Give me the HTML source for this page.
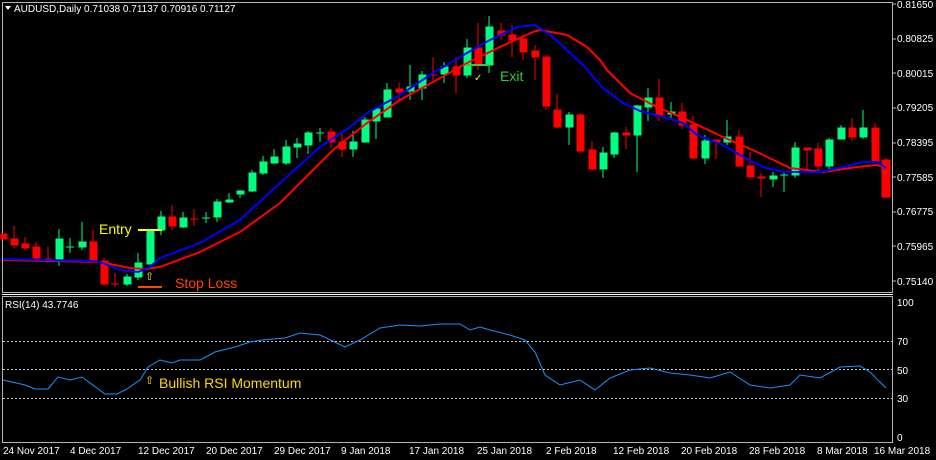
<!DOCTYPE html>
<html><head><meta charset="utf-8"><style>
html,body{margin:0;padding:0;background:#000;width:936px;height:460px;overflow:hidden}
svg{display:block}
text{font-family:"Liberation Sans",sans-serif}
</style></head><body>
<svg width="936" height="460" viewBox="0 0 936 460" xmlns="http://www.w3.org/2000/svg">
<rect width="936" height="460" fill="#000"/>
<!-- frames -->
<rect x="2.5" y="2.5" width="890" height="290" fill="none" stroke="#b4b4b4" stroke-width="1"/>
<line x1="2" y1="294.5" x2="893" y2="294.5" stroke="#ffffff" stroke-width="1"/>
<rect x="2.5" y="296.5" width="890" height="146" fill="none" stroke="#b4b4b4" stroke-width="1"/>
<text x="14" y="12" fill="#fff" font-size="10">AUDUSD,Daily  0.71038 0.71137 0.70916 0.71127</text>
<polygon points="5,6 11,6 8,10" fill="#fff"/>
<text x="5" y="308" fill="#fff" font-size="10">RSI(14) 43.7746</text>
<!-- price axis -->
<g fill="#fff" font-size="10">
<text x="897" y="8">0.81650</text><text x="897" y="42">0.80825</text><text x="897" y="77">0.80015</text>
<text x="897" y="111">0.79205</text><text x="897" y="146">0.78395</text><text x="897" y="181">0.77585</text>
<text x="897" y="215">0.76775</text><text x="897" y="250">0.75965</text><text x="897" y="285">0.75140</text>
<text x="897" y="306">100</text><text x="897" y="345">70</text><text x="897" y="374">50</text>
<text x="897" y="402">30</text><text x="897" y="441">0</text>
</g>
<g stroke="#b4b4b4"><line x1="893" y1="4" x2="896" y2="4"/><line x1="893" y1="39" x2="896" y2="39"/><line x1="893" y1="73" x2="896" y2="73"/><line x1="893" y1="108" x2="896" y2="108"/><line x1="893" y1="143" x2="896" y2="143"/><line x1="893" y1="177" x2="896" y2="177"/><line x1="893" y1="212" x2="896" y2="212"/><line x1="893" y1="246" x2="896" y2="246"/><line x1="893" y1="281" x2="896" y2="281"/></g>
<!-- date axis -->
<g fill="#fff" font-size="10">
<text x="3" y="454">24 Nov 2017</text><text x="70" y="454">4 Dec 2017</text><text x="138" y="454">12 Dec 2017</text>
<text x="206" y="454">20 Dec 2017</text><text x="274" y="454">29 Dec 2017</text><text x="341" y="454">9 Jan 2018</text>
<text x="409" y="454">17 Jan 2018</text><text x="477" y="454">25 Jan 2018</text><text x="546" y="454">2 Feb 2018</text>
<text x="613" y="454">12 Feb 2018</text><text x="681" y="454">20 Feb 2018</text><text x="749" y="454">28 Feb 2018</text>
<text x="817" y="454">8 Mar 2018</text><text x="874" y="454">16 Mar 2018</text>
</g>
<!-- RSI levels -->
<g stroke="#c8c8c8" stroke-dasharray="2,2" stroke-width="1">
<line x1="3" y1="341.5" x2="892" y2="341.5"/><line x1="3" y1="369.5" x2="892" y2="369.5"/><line x1="3" y1="398.5" x2="892" y2="398.5"/>
</g>
<polyline fill="none" stroke="#1e90ff" stroke-width="1" points="3,380 12,382 25,385 35,389 48,389 58,377 70,380 82,377 105,394 117,394 127,389 140,380 148,367 160,360 172,363 180,360 200,360 215,352 235,347 250,342 262,340 285,338 300,333 320,335 345,347 360,340 380,328 400,325 420,326 440,324 460,324 470,330 480,327 490,330 510,335 525,340 535,352 545,375 560,385 580,380 595,390 610,378 630,370 650,368 670,373 690,375 710,378 730,372 750,385 770,388 790,385 800,375 820,378 840,367 860,366 870,372 886,388"/>
<g>
<g stroke="#ff0000" fill="#ff0000">
<line x1="14" y1="226" x2="14" y2="248"/><rect x="11" y="239" width="7" height="6"/>
<rect x="1" y="234" width="6" height="5"/>
<line x1="25" y1="237" x2="25" y2="250"/><rect x="22" y="244" width="7" height="4"/>
<line x1="36" y1="242" x2="36" y2="260"/><rect x="33" y="247" width="7" height="11"/>
<line x1="48" y1="247" x2="48" y2="263"/><line x1="45" y1="259" x2="51" y2="259"/>
<line x1="93" y1="230" x2="93" y2="263"/><rect x="90" y="242" width="7" height="19"/>
<line x1="104" y1="258" x2="104" y2="286"/><rect x="101" y="261" width="7" height="23"/>
<line x1="115" y1="273" x2="115" y2="287"/><line x1="111" y1="284" x2="119" y2="284"/>
<line x1="172" y1="205" x2="172" y2="230"/><rect x="169" y="217" width="7" height="9"/>
<line x1="194" y1="209" x2="194" y2="226"/><line x1="190" y1="219" x2="198" y2="219"/>
<line x1="331" y1="128" x2="331" y2="148"/><rect x="328" y="132" width="7" height="10"/>
<line x1="342" y1="133" x2="342" y2="157"/><rect x="339" y="142" width="7" height="7"/>
<line x1="399" y1="83" x2="399" y2="102"/><rect x="396" y="89" width="7" height="3"/>
<line x1="433" y1="57" x2="433" y2="80"/><line x1="429" y1="75" x2="437" y2="75"/>
<line x1="456" y1="57" x2="456" y2="93"/><rect x="453" y="67" width="7" height="8"/>
<line x1="478" y1="23" x2="478" y2="70"/><rect x="475" y="48" width="7" height="16"/>
<line x1="501" y1="23" x2="501" y2="40"/><rect x="498" y="31" width="7" height="4"/>
<line x1="512" y1="25" x2="512" y2="57"/><rect x="509" y="35" width="7" height="5"/>
<line x1="523" y1="35" x2="523" y2="60"/><rect x="520" y="39" width="7" height="13"/>
<line x1="535" y1="45" x2="535" y2="80"/><rect x="532" y="51" width="7" height="6"/>
<line x1="546" y1="55" x2="546" y2="110"/><rect x="543" y="57" width="7" height="49"/>
<line x1="557" y1="94" x2="557" y2="128"/><rect x="554" y="110" width="7" height="17"/>
<line x1="580" y1="113" x2="580" y2="153"/><rect x="577" y="115" width="7" height="36"/>
<line x1="592" y1="141" x2="592" y2="170"/><rect x="589" y="150" width="7" height="19"/>
<line x1="626" y1="127" x2="626" y2="149"/><rect x="623" y="133" width="7" height="2"/>
<line x1="659" y1="79" x2="659" y2="121"/><rect x="656" y="98" width="7" height="17"/>
<line x1="682" y1="103" x2="682" y2="129"/><rect x="679" y="112" width="7" height="13"/>
<line x1="693" y1="116" x2="693" y2="159"/><rect x="690" y="125" width="7" height="33"/>
<line x1="716" y1="140" x2="716" y2="159"/><rect x="713" y="140" width="7" height="2"/>
<line x1="739" y1="130" x2="739" y2="167"/><rect x="736" y="137" width="7" height="29"/>
<line x1="750" y1="152" x2="750" y2="177"/><rect x="747" y="166" width="7" height="11"/>
<line x1="761" y1="173" x2="761" y2="197"/><rect x="758" y="177" width="7" height="1"/>
<line x1="807" y1="148" x2="807" y2="171"/><rect x="804" y="148" width="7" height="2"/>
<line x1="818" y1="143" x2="818" y2="171"/><rect x="815" y="149" width="7" height="17"/>
<line x1="852" y1="118" x2="852" y2="141"/><rect x="849" y="128" width="7" height="9"/>
<line x1="875" y1="123" x2="875" y2="162"/><rect x="872" y="128" width="7" height="33"/>
<line x1="886" y1="158" x2="886" y2="198"/><rect x="882" y="160" width="8" height="37"/>
</g>
<g stroke="#00ff80" fill="#00ff80">
<line x1="59" y1="229" x2="59" y2="266"/><rect x="56" y="239" width="7" height="21"/>
<line x1="70" y1="238" x2="70" y2="253"/><line x1="66" y1="247" x2="74" y2="247"/>
<line x1="82" y1="222" x2="82" y2="250"/><rect x="79" y="242" width="7" height="5"/>
<line x1="127" y1="274" x2="127" y2="286"/><rect x="124" y="277" width="7" height="7"/>
<line x1="138" y1="253" x2="138" y2="280"/><rect x="135" y="263" width="7" height="14"/>
<rect x="147" y="230" width="7" height="34"/>
<line x1="161" y1="211" x2="161" y2="235"/><rect x="158" y="217" width="7" height="13"/>
<line x1="183" y1="212" x2="183" y2="228"/><rect x="180" y="218" width="7" height="9"/>
<line x1="206" y1="212" x2="206" y2="223"/><line x1="202" y1="218" x2="210" y2="218"/>
<line x1="217" y1="199" x2="217" y2="222"/><rect x="214" y="202" width="7" height="15"/>
<line x1="229" y1="193" x2="229" y2="203"/><rect x="226" y="200" width="7" height="2"/>
<line x1="240" y1="190" x2="240" y2="198"/><rect x="237" y="191" width="7" height="3"/>
<line x1="252" y1="170" x2="252" y2="192"/><rect x="249" y="173" width="7" height="18"/>
<line x1="263" y1="156" x2="263" y2="175"/><rect x="260" y="162" width="7" height="11"/>
<line x1="274" y1="149" x2="274" y2="164"/><rect x="271" y="157" width="7" height="6"/>
<line x1="286" y1="140" x2="286" y2="165"/><rect x="283" y="147" width="7" height="16"/>
<line x1="297" y1="138" x2="297" y2="158"/><rect x="294" y="144" width="7" height="3"/>
<line x1="308" y1="131" x2="308" y2="154"/><rect x="305" y="133" width="7" height="12"/>
<line x1="320" y1="128" x2="320" y2="142"/><line x1="316" y1="133" x2="324" y2="133"/>
<line x1="353" y1="131" x2="353" y2="157"/><rect x="350" y="142" width="7" height="7"/>
<line x1="365" y1="117" x2="365" y2="143"/><rect x="362" y="120" width="7" height="22"/>
<line x1="376" y1="107" x2="376" y2="139"/><rect x="373" y="109" width="7" height="12"/>
<line x1="387" y1="83" x2="387" y2="117"/><rect x="384" y="90" width="7" height="27"/>
<line x1="410" y1="65" x2="410" y2="100"/><rect x="407" y="87" width="7" height="4"/>
<line x1="422" y1="71" x2="422" y2="100"/><rect x="419" y="75" width="7" height="13"/>
<line x1="444" y1="62" x2="444" y2="83"/><rect x="441" y="67" width="7" height="7"/>
<line x1="467" y1="39" x2="467" y2="78"/><rect x="464" y="48" width="7" height="27"/>
<line x1="489" y1="16" x2="489" y2="73"/><rect x="486" y="27" width="7" height="38"/>
<line x1="569" y1="112" x2="569" y2="145"/><rect x="566" y="115" width="7" height="12"/>
<line x1="603" y1="147" x2="603" y2="178"/><rect x="600" y="153" width="7" height="16"/>
<line x1="614" y1="132" x2="614" y2="158"/><rect x="611" y="133" width="7" height="21"/>
<line x1="637" y1="105" x2="637" y2="172"/><rect x="634" y="106" width="7" height="29"/>
<line x1="648" y1="88" x2="648" y2="121"/><rect x="645" y="98" width="7" height="9"/>
<line x1="671" y1="102" x2="671" y2="118"/><rect x="668" y="112" width="7" height="2"/>
<line x1="705" y1="135" x2="705" y2="164"/><rect x="702" y="141" width="7" height="17"/>
<line x1="727" y1="120" x2="727" y2="145"/><rect x="724" y="137" width="7" height="5"/>
<line x1="773" y1="172" x2="773" y2="187"/><rect x="770" y="176" width="7" height="3"/>
<line x1="784" y1="173" x2="784" y2="192"/><line x1="780" y1="175" x2="788" y2="175"/>
<line x1="795" y1="142" x2="795" y2="178"/><rect x="792" y="148" width="7" height="27"/>
<line x1="829" y1="138" x2="829" y2="170"/><rect x="826" y="140" width="7" height="26"/>
<line x1="841" y1="125" x2="841" y2="139"/><rect x="838" y="128" width="7" height="11"/>
<line x1="863" y1="110" x2="863" y2="139"/><rect x="860" y="128" width="7" height="9"/>
</g>
</g>
<!-- MAs -->
<polyline fill="none" stroke="#ff0000" stroke-width="2" stroke-linejoin="round" points="3,260 100,262 130,268 145,269 160,267 200,252 240,232 280,203 300,183 320,163 333,150 367,123 400,100 433,82 467,63 500,47 533,32 540,30 567,35 587,47 600,60 607,70 630,93 657,107 683,118 723,137 757,152 790,168 823,172 857,167 877,165 886,168"/>
<polyline fill="none" stroke="#0000ff" stroke-width="2" stroke-linejoin="round" points="3,259 40,260 90,261 100,262 120,270 138,272 150,267 160,258 200,243 240,220 280,183 300,165 320,147 350,127 367,113 400,95 433,73 467,53 490,40 517,27 535,25 553,37 583,65 603,88 623,103 640,111 667,118 683,123 697,135 723,145 740,155 763,167 783,172 820,172 843,167 863,162 877,162 886,168"/>
<!-- annotations -->
<line x1="138" y1="230" x2="162" y2="230" stroke="#ffff00" stroke-width="2"/>
<text x="99" y="234" fill="#ffff00" font-size="14">Entry</text>
<line x1="138" y1="287" x2="162" y2="287" stroke="#ff4500" stroke-width="2"/>
<text x="175" y="288" fill="#ff4500" font-size="14">Stop Loss</text>
<text x="145" y="280" fill="#ffd700" font-size="11">⇧</text>
<line x1="466" y1="65" x2="490" y2="65" stroke="#32cd32" stroke-width="2"/>
<text x="500" y="81" fill="#32cd32" font-size="14">Exit</text>
<text x="474" y="81" fill="#ffff00" font-size="10">✓</text>
<text x="145" y="384" fill="#ffd700" font-size="11">⇧</text>
<text x="159" y="388" fill="#ffd700" font-size="14">Bullish RSI Momentum</text>
</svg>
</body></html>
